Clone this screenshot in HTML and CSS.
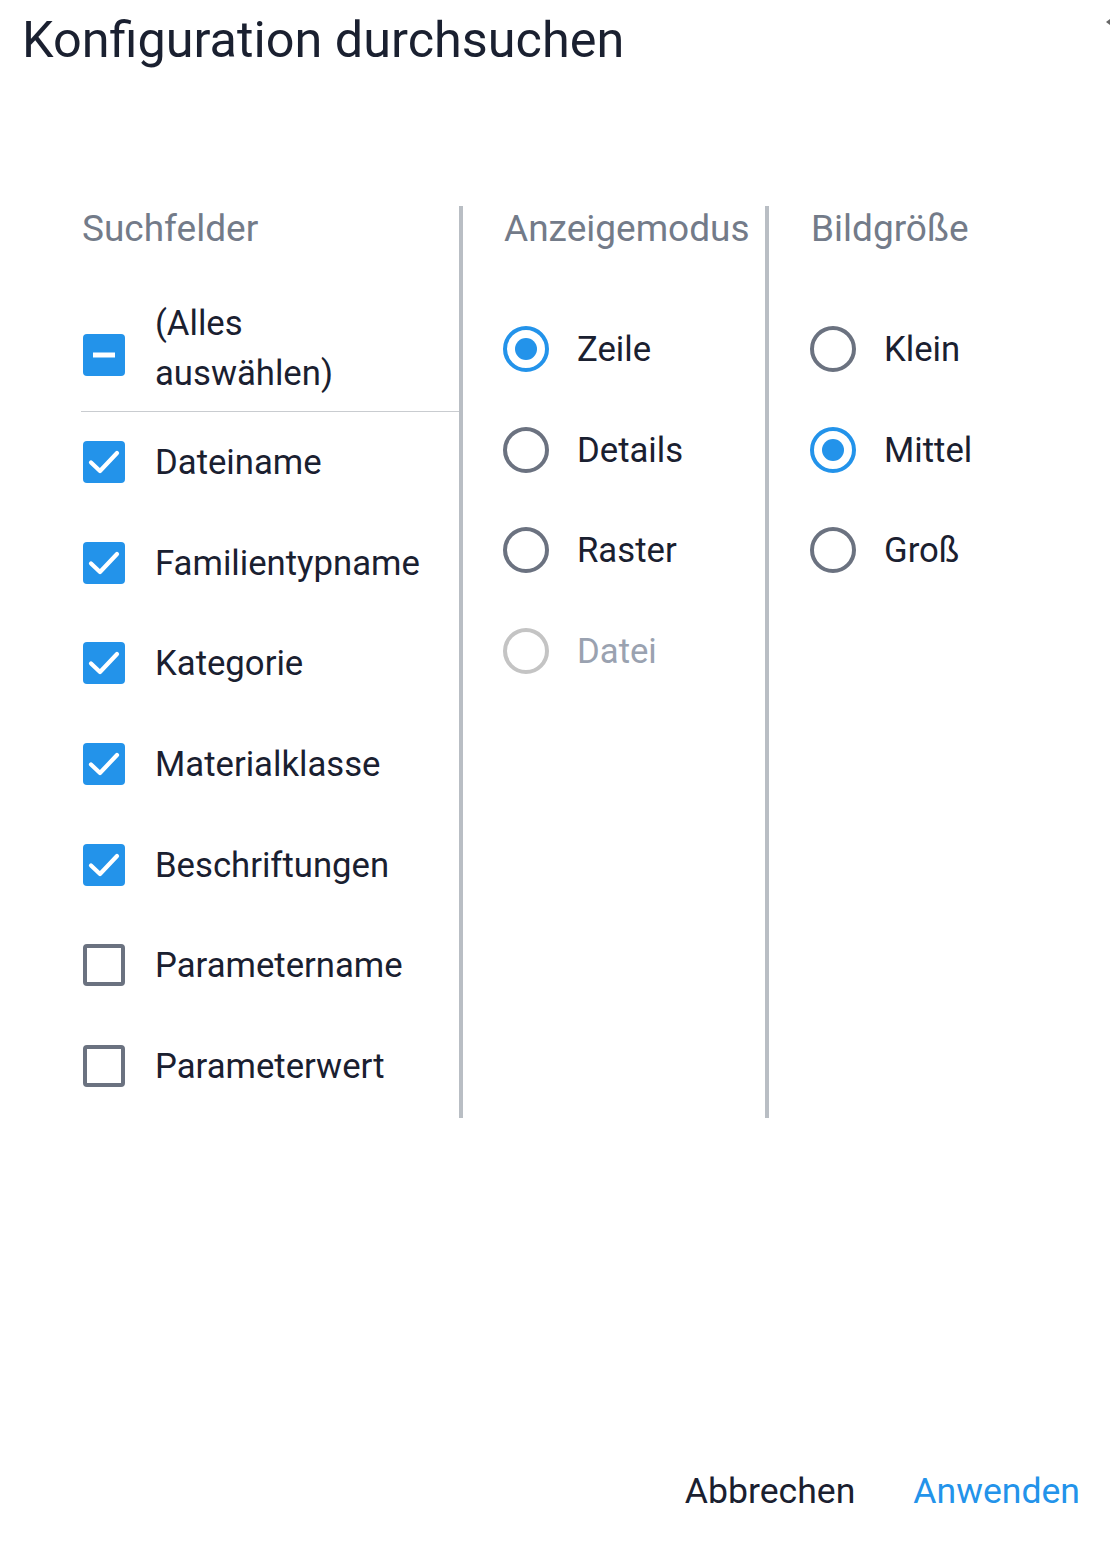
FILE: index.html
```html
<!DOCTYPE html>
<html lang="de">
<head>
<meta charset="utf-8">
<title>Konfiguration durchsuchen</title>
<link rel="stylesheet" href="styles.css">
</head>
<body>
<div class="dialog">
  <h1 class="title">Konfiguration durchsuchen</h1>
  <span class="corner"></span>
  <div class="columns">
    <section class="col col-fields">
      <h2 class="col-head">Suchfelder</h2>
      <div class="row row-all">
        <span class="cb cb-ind"><svg viewBox="0 0 42 42" width="42" height="42"><rect x="10" y="18.5" width="22" height="5" fill="#fff"/></svg></span>
        <span class="label">(Alles<br>auswählen)</span>
      </div>
      <div class="row"><span class="cb cb-on"><svg viewBox="0 0 42 42" width="42" height="42"><path d="M8 21.5 L17 30 L34 12" fill="none" stroke="#fff" stroke-width="4.2" stroke-linecap="round" stroke-linejoin="round"/></svg></span><span class="label">Dateiname</span></div>
      <div class="row"><span class="cb cb-on"><svg viewBox="0 0 42 42" width="42" height="42"><path d="M8 21.5 L17 30 L34 12" fill="none" stroke="#fff" stroke-width="4.2" stroke-linecap="round" stroke-linejoin="round"/></svg></span><span class="label">Familientypname</span></div>
      <div class="row"><span class="cb cb-on"><svg viewBox="0 0 42 42" width="42" height="42"><path d="M8 21.5 L17 30 L34 12" fill="none" stroke="#fff" stroke-width="4.2" stroke-linecap="round" stroke-linejoin="round"/></svg></span><span class="label">Kategorie</span></div>
      <div class="row"><span class="cb cb-on"><svg viewBox="0 0 42 42" width="42" height="42"><path d="M8 21.5 L17 30 L34 12" fill="none" stroke="#fff" stroke-width="4.2" stroke-linecap="round" stroke-linejoin="round"/></svg></span><span class="label">Materialklasse</span></div>
      <div class="row"><span class="cb cb-on"><svg viewBox="0 0 42 42" width="42" height="42"><path d="M8 21.5 L17 30 L34 12" fill="none" stroke="#fff" stroke-width="4.2" stroke-linecap="round" stroke-linejoin="round"/></svg></span><span class="label">Beschriftungen</span></div>
      <div class="row"><span class="cb cb-off"></span><span class="label">Parametername</span></div>
      <div class="row"><span class="cb cb-off"></span><span class="label">Parameterwert</span></div>
    </section>
    <section class="col col-mode">
      <h2 class="col-head">Anzeigemodus</h2>
      <div class="list">
        <div class="row"><span class="radio radio-on"></span><span class="label">Zeile</span></div>
        <div class="row"><span class="radio"></span><span class="label">Details</span></div>
        <div class="row"><span class="radio"></span><span class="label">Raster</span></div>
        <div class="row disabled"><span class="radio"></span><span class="label">Datei</span></div>
      </div>
    </section>
    <section class="col col-size">
      <h2 class="col-head">Bildgröße</h2>
      <div class="list">
        <div class="row"><span class="radio"></span><span class="label">Klein</span></div>
        <div class="row"><span class="radio radio-on"></span><span class="label">Mittel</span></div>
        <div class="row"><span class="radio"></span><span class="label">Groß</span></div>
      </div>
    </section>
  </div>
  <div class="actions">
    <button class="btn btn-cancel">Abbrechen</button>
    <button class="btn btn-apply">Anwenden</button>
  </div>
</div>
</body>
</html>
```

FILE: styles.css
```css
* { box-sizing: border-box; }
html, body { margin: 0; padding: 0; background: #fff; }
body {
  font-family: Roboto, "Noto Sans", sans-serif;
  color: #1a2030;
  width: 1110px;
  height: 1542px;
  overflow: hidden;
}
.dialog { position: relative; height: 1542px; }
.title {
  margin: 0;
  padding: 12px 0 0 22px;
  font-size: 50.4px;
  line-height: 56px;
  font-weight: 400;
  color: #1a2030;
}
.corner {
  position: absolute;
  right: 0;
  top: 19px;
  width: 0; height: 0;
  border-top: 3px solid transparent;
  border-bottom: 3px solid transparent;
  border-right: 4px solid #666;
}
.columns {
  display: flex;
  margin: 138px 0 0 81px;
  height: 912px;
}
.col { display: flex; flex-direction: column; }
.col-fields { width: 382px; border-right: 4px solid #b9bec4; }
.col-mode { width: 306px; padding-left: 40px; border-right: 4px solid #b9bec4; }
.col-size { padding-left: 41px; }
.col-head {
  margin: 0;
  height: 44px;
  font-size: 37px;
  line-height: 46px;
  font-weight: 400;
  color: #737b89;
  white-space: nowrap;
  padding-left: 1px;
}
.row {
  display: flex;
  align-items: center;
  height: 100.6px;
  padding-left: 2px;
}
.row-all {
  height: auto;
  margin-top: 48px;
  padding-bottom: 13px;
  border-bottom: 1px solid #c9ccd0;
}
.row-all .label { line-height: 50px; }
.row-all .cb { margin-top: 14px; }
.label {
  font-size: 34.7px;
  line-height: 40px;
  white-space: nowrap;
  color: #1a2030;
}
.col-fields .label { margin-left: 30px; }
.cb {
  flex: none;
  width: 42px;
  height: 42px;
  border-radius: 4px;
  display: block;
}
.cb svg { display: block; }
.cb-on, .cb-ind { background: #2393ea; }
.cb-off { border: 4px solid #6b7280; }
.list { margin-top: 49px; }
.col-mode .row, .col-size .row { padding-left: 0; }
.radio {
  flex: none;
  width: 46px;
  height: 46px;
  border-radius: 50%;
  border: 4px solid #6b7280;
  display: flex;
  align-items: center;
  justify-content: center;
  margin-right: 28px;
}
.radio-on { border-color: #2393ea; }
.radio-on::after {
  content: "";
  width: 22px;
  height: 22px;
  border-radius: 50%;
  background: #2393ea;
}
.disabled .radio { border-color: #c4c4c4; }
.disabled .label { color: #9aa2b0; }
.actions {
  display: flex;
  justify-content: flex-end;
  gap: 58px;
  padding-right: 30px;
  margin-top: 352px;
}
.btn {
  background: none;
  border: 0;
  padding: 0;
  font-family: Roboto, "Noto Sans", sans-serif;
  font-size: 35.6px;
  line-height: 42px;
  cursor: pointer;
}
.btn-cancel { color: #1a2030; }
.btn-apply { color: #2393ea; }
```
